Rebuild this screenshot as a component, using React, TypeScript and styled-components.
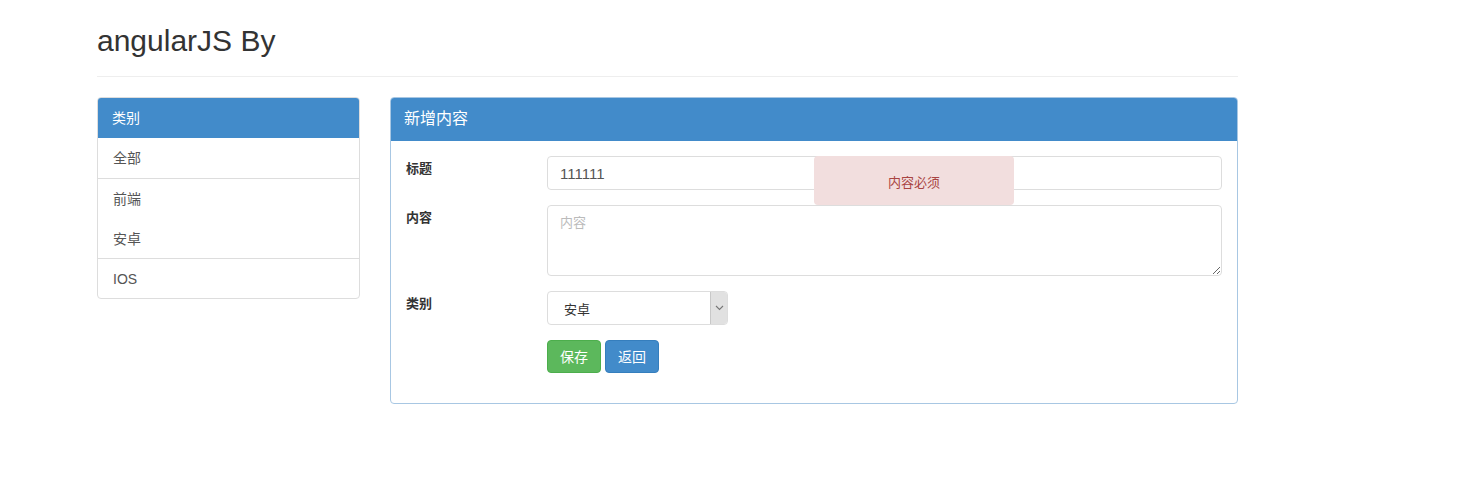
import React from 'react';
import styled, { createGlobalStyle } from 'styled-components';

const GlobalStyle = createGlobalStyle`
  html, body {
    margin: 0;
    padding: 0;
    background: #fff;
  }
  body {
    font-family: 'Liberation Sans', 'Noto Sans CJK SC', sans-serif;
    font-size: 14px;
    line-height: 20px;
    color: #333;
  }
  * {
    box-sizing: border-box;
  }
`;

const categories = [
  { name: '全部', border: false },
  { name: '前端', border: true },
  { name: '安卓', border: false },
  { name: 'IOS', border: true },
];

const App: React.FC = () => {
  return (
    <>
      <GlobalStyle />
      <Container>
        <PageHeader>
          <Title>angularJS By</Title>
        </PageHeader>
        <Row>
          <Sidebar>
            <SideHeading>类别</SideHeading>
            {categories.map((c) => (
              <SideItem key={c.name} $border={c.border}>
                {c.name}
              </SideItem>
            ))}
          </Sidebar>

          <Panel>
            <PanelHeading>新增内容</PanelHeading>
            <PanelBody>
              <FormGroup>
                <Label>标题</Label>
                <Field>
                  <Input defaultValue="111111" />
                  <Tip>内容必须</Tip>
                </Field>
              </FormGroup>
              <FormGroup>
                <Label>内容</Label>
                <Field>
                  <TextArea placeholder="内容" rows={3} />
                </Field>
              </FormGroup>
              <FormGroup>
                <Label>类别</Label>
                <Field>
                  <Select>
                    <SelectValue>安卓</SelectValue>
                    <SelectArrow>
                      <svg width="9" height="6" viewBox="0 0 9 6">
                        <path d="M1 1 L4.5 4.5 L8 1" fill="none" stroke="#777" strokeWidth="1.1" />
                      </svg>
                    </SelectArrow>
                  </Select>
                </Field>
              </FormGroup>
              <FormGroup>
                <Label />
                <Field>
                  <Buttons>
                    <Button $variant="success">保存</Button>
                    <Button $variant="primary">返回</Button>
                  </Buttons>
                </Field>
              </FormGroup>
            </PanelBody>
          </Panel>
        </Row>
      </Container>
    </>
  );
};

export default App;

const Container = styled.div`
  width: 1141px;
  margin-left: 97px;
`;

const PageHeader = styled.div`
  padding-top: 24px;
  padding-bottom: 9px;
  border-bottom: 1px solid #eee;
  margin-bottom: 20px;
`;

const Title = styled.h2`
  margin: 0 0 10px;
  font-size: 30px;
  font-weight: 400;
  line-height: 33px;
  color: #333;
`;

const Row = styled.div`
  display: flex;
  align-items: flex-start;
  gap: 30px;
`;

// 왼쪽 카테고리 패널
const Sidebar = styled.div`
  width: 263px;
  border: 1px solid #ddd;
  border-radius: 4px;
  overflow: hidden;
`;

const SideHeading = styled.div`
  background: #428bca;
  color: #fff;
  padding: 11px 15px 10px;
  height: 41px;
  line-height: 20px;
  margin: -1px -1px 0;
`;

const SideItem = styled.div<{ $border: boolean }>`
  padding: 10px 15px;
  height: 40px;
  color: #555;
  border-top: 1px solid ${(p) => (p.$border ? '#ddd' : 'transparent')};
  &:nth-of-type(2) {
    border-top: none;
  }
`;

// 오른쪽 폼 패널
const Panel = styled.div`
  width: 848px;
  border: 1px solid #a8c7e3;
  border-radius: 4px;
  overflow: hidden;
`;

const PanelHeading = styled.div`
  background: #428bca;
  color: #fff;
  height: 44px;
  padding: 12px 14px;
  font-size: 16px;
  line-height: 20px;
  margin: -1px -1px 0;
`;

const PanelBody = styled.div`
  padding: 15px 15px 15px;
  display: flex;
  flex-direction: column;
`;

const FormGroup = styled.div`
  display: flex;
  margin-bottom: 15px;
`;

const Label = styled.label`
  width: 141px;
  flex: none;
  padding-top: 3px;
  font-weight: 700;
  font-size: 13px;
  color: #333;
`;

const Field = styled.div`
  flex: 1;
  position: relative;
`;

const Input = styled.input`
  display: block;
  width: 100%;
  height: 34px;
  padding: 6px 12px;
  font-family: inherit;
  font-size: 15px;
  color: #555;
  border: 1px solid #ddd;
  border-radius: 4px;
  outline: none;
`;

const Tip = styled.div`
  position: absolute;
  left: 267px;
  top: 0;
  width: 200px;
  height: 49px;
  background: #f2dede;
  color: #a94442;
  border-radius: 4px;
  font-size: 13px;
  display: flex;
  align-items: center;
  justify-content: center;
  padding-top: 5px;
`;

const TextArea = styled.textarea`
  display: block;
  width: 100%;
  height: 71px;
  padding: 6px 12px;
  font-family: inherit;
  font-size: 13px;
  color: #555;
  border: 1px solid #ddd;
  border-radius: 4px;
  outline: none;
  resize: vertical;
  &::placeholder {
    color: #bbb;
  }
`;

const Select = styled.div`
  width: 181px;
  height: 34px;
  border: 1px solid #ddd;
  border-radius: 4px;
  display: flex;
  overflow: hidden;
`;

const SelectValue = styled.div`
  flex: 1;
  padding: 8px 16px 6px;
  font-size: 13px;
  color: #333;
`;

const SelectArrow = styled.div`
  width: 17px;
  background: #e1e1e1;
  border-left: 1px solid #c8c8c8;
  display: flex;
  align-items: center;
  justify-content: center;
`;

const Buttons = styled.div`
  display: flex;
  gap: 4px;
`;

const Button = styled.button<{ $variant: 'success' | 'primary' }>`
  height: 33px;
  padding: 6px 12px;
  font-family: inherit;
  font-size: 14px;
  line-height: 20px;
  color: #fff;
  border-radius: 4px;
  cursor: pointer;
  background: ${(p) => (p.$variant === 'success' ? '#5cb85c' : '#428bca')};
  border: 1px solid ${(p) => (p.$variant === 'success' ? '#4cae4c' : '#357ebd')};
`;
